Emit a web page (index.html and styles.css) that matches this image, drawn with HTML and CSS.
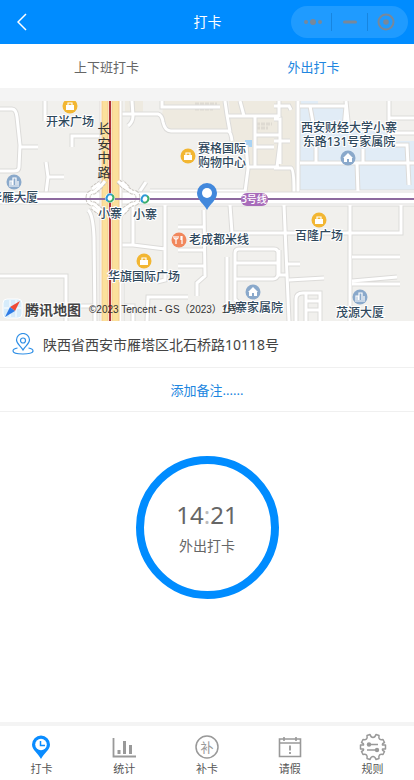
FILE: index.html
```
<!DOCTYPE html>
<html lang="zh-CN">
<head>
    <meta charset="UTF-8">
    <meta name="viewport" content="width=device-width, initial-scale=1.0">
    <title>打卡</title>
    <link rel="stylesheet" href="styles.css">
</head>
<body>
    <header class="nav-bar">
        <button class="nav-back" type="button" aria-label="返回">
            <svg width="10" height="18" viewBox="0 0 10 18"><path d="M9 1L1 9l8 8"/></svg>
        </button>
        <h1 class="nav-title">打卡</h1>
        <div class="capsule">
            <button type="button" aria-label="更多">
                <svg width="20" height="18" viewBox="0 0 20 18"><circle cx="3" cy="9" r="2"/><circle cx="10" cy="9" r="3"/><circle cx="17" cy="9" r="2"/></svg>
            </button>
            <button type="button" aria-label="最小化">
                <svg width="18" height="18" viewBox="0 0 18 18"><rect x="2" y="7.5" width="14" height="3" rx="1.5"/></svg>
            </button>
            <button type="button" aria-label="关闭">
                <svg width="18" height="18" viewBox="0 0 18 18"><circle class="ring" cx="9" cy="9" r="7.5"/><circle cx="9" cy="9" r="2.8"/></svg>
            </button>
        </div>
    </header>

    <nav class="tabs">
        <button class="tab" type="button">上下班打卡</button>
        <button class="tab active" type="button">外出打卡</button>
    </nav>

    <main class="content">
        <svg class="map" viewBox="0 0 414 220" preserveAspectRatio="xMidYMid slice">
            <defs>
                <path id="roads" d="M0 8h12q4 0 5 8l3 28-1 22q0 4-5 4H0M20 46h18M45 0v20M72 46V35h29M46 61l2 15-2 16M48 76h16
                    M132 0l1 15q0 6-5 10M121 13h37q4 1 5 8 2 9 8 9h57q3 1 4 10M162 0v6h58M225 0l2 14 3 17M227 15h52M255 14v52M240 0l4 15M255 34h24M255 46h19M280 20v43M248 66h31M246 44l2 24-3 23M279 0v16
                    M274 18h6v24l-3 24M274 40h16M274 67h17q3 1 3 24M274 5h15l2 4M140 90l6-9M150 90h95
                    M298 0v92M300 5h46l-2 22M310 5l4 22M346 0l3 30M389 0v40M389 17h25M389 32h25M300 62h114M357 62l1 30M316 42v20M363 48v14M389 44h18l2 40M300 91h114
                    M66 220v-45H0M66 205h29M88 109q5 4 6 27l1 84M133 105v39h-11M133 144l32 4M165 102v77l-8 2M150 103h264M122 182v38M122 205h11v15
                    M178 126h27M204 109l1 66-8 7v13M178 149h27M178 165h27M230 104l2 28h169v-28M284 104l5 116M289 179l35-2M288 163h12
                    M235 200v-48q0-4 4-4h35q4 0 4 4v22q-1 4-5 4h-38M235 162h42M227 156v54M147 220l1-24h40M235 198l5 5h8
                    M279 149v25h8M350 104v116M352 156h48M352 180l45-4M352 183h48M296 220v-22q0-6 7-6h17v28M306 192v28M306 200h14M306 209h14"/>
                <g id="poi-shop"><circle r="7.5"/><path fill="#fff" d="M-4-1h8v5h-8z"/><path class="poi-line" d="M-2-1v-2h4v2"/></g>
                <g id="poi-home"><circle r="7.5"/><path fill="#fff" d="M0-5L-5 0h1v4h3V1h2v3h3V0h1z"/></g>
                <g id="poi-tower"><circle r="7.5"/><path class="poi-line" d="M-5 4H5M-4 3v-4h2v4M-1 3v-7h3v7M4 3v-4"/></g>
                <g id="station"><circle r="5" fill="#fff"/><path d="M-2 3.2A3.8 3.8 0 0 1 2-3.2" stroke="#2d97d8"/><path d="M2-3.2A3.8 3.8 0 0 1-2 3.2" stroke="#3cae6b"/></g>
            </defs>
            <rect width="414" height="220" fill="#f1f0ed"/>
            <path fill="#eeeae0" d="M164 0h61l4 30h-59l-8-16zM229 0h66v91h-48l-2-48h-13zM125 0h18v12h-18z"/>
            <path fill="#e1ecf6" d="M300 5h46v25h43v10h25v51H300zM301 0h17v4h-17z"/>
            <path fill="#a9d3f4" d="M245 39h7v7h-7z"/>
            <path class="block-marks" d="M195 3h22M195 8h18M256 23h16M256 27h12"/>
            <use href="#roads" class="road-edge"/>
            <use href="#roads" class="road"/>

            <!-- 主干道与地铁 -->
            <path class="street-edge" d="M0 97h414"/>
            <path class="street" d="M0 97h414"/>
            <path fill="#fff" stroke="#e0ddda" d="M100-1h22v222h-22z"/>
            <path fill="#fbe09b" stroke="#f3c98c" d="M102-1h6v222h-6zM112-1h7v222h-7z"/>
            <g class="junction">
                <path class="junction-edge" d="M88 97q0-6 6-6l7-6 4-5M88 97q0 6 6 6l7 6 4 5M138 97q0-6-6-6l-9-6-5-5M138 97q0 6-6 6l-9 6-5 5M92 88l8-6M92 106l8 6M128 87l-6-6M128 107l-6 6"/>
                <path class="junction-road" d="M88 97q0-6 6-6l7-6 4-5M88 97q0 6 6 6l7 6 4 5M138 97q0-6-6-6l-9-6-5-5M138 97q0 6-6 6l-9 6-5 5M92 88l8-6M92 106l8 6M128 87l-6-6M128 107l-6 6"/>
            </g>
            <path d="M0 98h414" stroke="#8d6a9f" stroke-width="2"/>
            <path d="M110 0v220" stroke="#b0323c" stroke-width="2"/>
            <use href="#station" class="station" x="110" y="97"/>
            <use href="#station" class="station" x="145" y="98"/>
            <rect x="241" y="92" width="27" height="13" rx="6" fill="#a86cba"/>
            <text class="line-name" x="254" y="102">3号线</text>

            <g fill="#f2b632">
                <use href="#poi-shop" x="70" y="5"/>
                <use href="#poi-shop" x="188" y="55"/>
                <use href="#poi-shop" x="319" y="119"/>
                <use href="#poi-shop" x="144" y="160"/>
            </g>
            <g fill="#8aa9cb">
                <use href="#poi-tower" x="14" y="81"/>
                <use href="#poi-home" x="348" y="57"/>
                <use href="#poi-home" x="253" y="191"/>
                <use href="#poi-tower" x="360" y="196"/>
            </g>
            <circle cx="179" cy="139" r="7.5" fill="#f1875c"/>
            <path class="poi-line" d="M176 135v8M174 135v2q2 3 4 0v-2M182 135v8M181 135v4"/>

            <g class="map-label">
                <text x="70" y="25">开米广场</text>
                <text x="14" y="101">华雁大厦</text>
                <text x="222" y="52">赛格国际</text>
                <text x="222" y="66">购物中心</text>
                <text x="349" y="31">西安财经大学小寨</text>
                <text x="349" y="45">东路131号家属院</text>
                <text x="110" y="117">小寨</text>
                <text x="145" y="118">小寨</text>
                <text x="219" y="143">老成都米线</text>
                <text x="319" y="139">百隆广场</text>
                <text x="144" y="180">华旗国际广场</text>
                <text x="253" y="211">小寨家属院</text>
                <text x="360" y="216">茂源大厦</text>
            </g>
            <g class="road-name">
                <text x="104" y="32">长</text>
                <text x="104" y="47">安</text>
                <text x="104" y="61">中</text>
                <text x="104" y="76">路</text>
            </g>

            <path fill="#4288dc" d="M207 109c-3-6-10-10-10-17a10 10 0 0 1 20 0c0 7-7 11-10 17z"/>
            <circle cx="207" cy="92" r="5" fill="#fff"/>

            <rect x="3" y="198" width="19" height="19" rx="4" fill="#d7ecfb" stroke="#fff"/>
            <path stroke="#fff" d="M4 207h17M10 199v17M16 199v17"/>
            <path fill="#ef4b36" d="M20 200l-10 6 5 4z"/>
            <path fill="#2f7be5" d="M5 216l5-10 5 4z"/>
            <text class="map-brand" x="25" y="214">腾讯地图</text>
            <text class="map-copy" x="89" y="212">©2023 Tencent - GS（2023）1号</text>
        </svg>

        <div class="address">
            <svg width="22" height="22" viewBox="0 0 22 22">
                <path d="M11 17C9 13 4.500 11 4.500 7a6.500 6.500 0 0 1 13 0c0 4-4.500 6-6.500 10z"/>
                <circle cx="11" cy="7.500" r="2.500"/>
                <path d="M5.500 15C2.500 15.500 1 16.500 1 18c0 4 20 4 20 0 0-1.500-1.500-2.500-4.500-3"/>
            </svg>
            <span>陕西省西安市雁塔区北石桥路10118号</span>
        </div>
        <button class="remark" type="button">添加备注......</button>

        <button class="punch" type="button">
            <span class="punch-time">14<span class="colon">:</span>21</span>
            <span class="punch-text">外出打卡</span>
        </button>
    </main>

    <footer class="tab-bar">
        <a class="bar-item" href="#">
            <svg width="28" height="28" viewBox="0 0 28 28">
                <path fill="#0a8cff" d="M14 26C11 20 5 17 5 11.500a9 9 0 0 1 18 0C23 17 17 20 14 26z"/>
                <circle cx="14" cy="11.500" r="5.800" fill="#fff"/>
                <path class="clock-hand" d="M13.500 8v4.500H18"/>
            </svg>
            <span>打卡</span>
        </a>
        <a class="bar-item" href="#">
            <svg width="28" height="28" viewBox="0 0 28 28">
                <path d="M3.500 5v18.500H26" stroke-width="1.800"/>
                <path d="M9 17v4M14.500 8v13M20.500 12v9" stroke-width="3"/>
            </svg>
            <span>统计</span>
        </a>
        <a class="bar-item" href="#">
            <svg width="28" height="28" viewBox="0 0 28 28">
                <circle cx="14" cy="14" r="11" stroke-width="1.500"/>
                <text x="14" y="19">补</text>
            </svg>
            <span>补卡</span>
        </a>
        <a class="bar-item" href="#">
            <svg width="28" height="28" viewBox="0 0 28 28">
                <path d="M3.500 6h21v17.500h-21zM3.500 10h21M8 4v4M20 4v4" stroke-width="1.600"/>
                <path d="M14 12.500v5M14 19v2" stroke-width="1.800"/>
            </svg>
            <span>请假</span>
        </a>
        <a class="bar-item" href="#">
            <svg width="28" height="28" viewBox="0 0 28 28">
                <path stroke-width="1.500" stroke-linejoin="round" d="M11 1.500Q12 4.500 14 4.500T17 1.500L20 2.500Q19.500 5 20.500 6T24 6.500L25.500 9.500Q23 10.500 23.500 12H26.500v4H23.500Q23 17.500 25.500 18.500L24 21.500Q21.500 21 20.500 22T20 25.500L17 26.500Q16 23.500 14 23.500T11 26.500L8 25.500Q8.500 23 7.500 22T4 21.500L2.500 18.500Q5 17.500 4.500 16H1.500v-4H4.500Q5 10.500 2.500 9.500L4 6.500Q6.500 7 7.500 6T8 2.500z"/>
                <path d="M8 11.500h11M8 17h11" stroke-width="1.300"/>
                <circle cx="10" cy="11.500" r="2.200" fill="#999"/>
                <circle cx="18" cy="17" r="2.200" fill="#999"/>
            </svg>
            <span>规则</span>
        </a>
    </footer>
</body>
</html>
```
FILE: styles.css
```
* {
    box-sizing: border-box;
}
body {
    margin: 0;
    min-height: 100vh;
    display: flex;
    flex-direction: column;
    background: #fff;
    color: #444;
    font-family: "Noto Sans", "Noto Sans CJK SC", sans-serif;
    font-weight: 400;
}
button {
    padding: 0;
    border: none;
    background: none;
    color: inherit;
    font: inherit;
    cursor: pointer;
}
.nav-bar {
    display: grid;
    grid-template-columns: 1fr auto 1fr;
    align-items: center;
    height: 44px;
    padding: 0 6px 0 17px;
    background: #008cff;
    color: #fff;
}
.nav-back {
    justify-self: start;
    display: flex;
}
.nav-back svg {
    fill: none;
    stroke: #fff;
    stroke-width: 1.5;
}
.nav-title {
    margin: 0;
    padding-right: 10px;
    font-size: 14px;
    line-height: 20px;
    font-weight: 400;
}
.capsule {
    justify-self: end;
    display: flex;
    align-items: center;
    width: 117px;
    height: 32px;
    padding: 0 4px;
    border-radius: 16px;
    background: #1f9bff;
}
.capsule button {
    flex: 1;
    display: flex;
    justify-content: center;
    padding: 0;
}
.capsule button + button {
    border-left: 1px solid #1785e0;
}
.capsule svg {
    fill: #78889a;
}
.capsule .ring {
    fill: none;
    stroke: #78889a;
    stroke-width: 2;
}
.tabs {
    display: flex;
    height: 44px;
}
.tab {
    flex: 1;
    padding-left: 6px;
    font-size: 13px;
    color: #666;
}
.tab.active {
    color: #2086e0;
}
.content {
    flex: 1;
    display: flex;
    flex-direction: column;
    border-top: 13px solid #f4f4f4;
}
.map {
    display: block;
    width: 100%;
    height: 220px;
    fill: none;
}
.road-edge {
    stroke: #dcdbd9;
    stroke-width: 5;
}
.road {
    stroke: #fff;
    stroke-width: 3;
}
.block-marks {
    stroke: #dedad2;
    stroke-width: 3;
    stroke-dasharray: 4 1;
}
.street-edge {
    stroke: #dddcda;
    stroke-width: 13;
}
.street {
    stroke: #fff;
    stroke-width: 11;
}
.junction-edge {
    stroke: #c9c5bf;
    stroke-width: 5;
    stroke-dasharray: 3 1;
}
.junction-road {
    stroke: #fff;
    stroke-width: 3;
}
.station {
    stroke-width: 2;
}
.poi-line {
    fill: none;
    stroke: #fff;
    stroke-width: 1.2;
}
.line-name {
    fill: #fff;
    font-size: 10px;
    font-weight: 500;
    text-anchor: middle;
}
.map-label,
.road-name {
    fill: #2f485c;
    stroke: #fff;
    stroke-width: 2;
    paint-order: stroke;
    font-size: 12px;
    font-weight: 500;
    text-anchor: middle;
}
.road-name {
    fill: #333;
    stroke: none;
    font-size: 13px;
    font-weight: 400;
}
.map-brand {
    fill: #444;
    stroke: #fff;
    stroke-width: 2;
    paint-order: stroke;
    font-size: 14px;
    font-weight: 700;
}
.map-copy {
    fill: #333;
    font-family: "Liberation Sans", "Noto Sans CJK SC", sans-serif;
    font-size: 10px;
    font-weight: 400;
}
.address {
    display: flex;
    align-items: center;
    gap: 9px;
    height: 47px;
    padding: 0 12px;
    border-bottom: 1px solid #f0f0f0;
    font-size: 14px;
}
.address svg {
    fill: none;
    stroke: #2f8fe6;
    stroke-width: 1.2;
}
.remark {
    height: 44px;
    border-bottom: 1px solid #f0f0f0;
    color: #2086e0;
    font-size: 13px;
}
.punch {
    display: flex;
    flex-direction: column;
    align-items: center;
    justify-content: center;
    align-self: center;
    width: 143px;
    height: 143px;
    margin: 44px 0;
    border: 8px solid #008cff;
    border-radius: 50%;
    color: #666;
}
.punch-time {
    font-size: 24px;
    line-height: 36px;
}
.colon {
    color: #bbb;
}
.punch-text {
    font-size: 14px;
    line-height: 26px;
}
.tab-bar {
    display: flex;
    height: 58px;
    border-top: 4px solid #f4f4f4;
}
.bar-item {
    flex: 1;
    display: flex;
    flex-direction: column;
    align-items: center;
    padding-top: 7px;
    color: #555;
    font-size: 11px;
    line-height: 16px;
    text-decoration: none;
}
.bar-item svg {
    fill: none;
    stroke: #999;
}
.bar-item path[fill],
.bar-item circle[fill] {
    stroke: none;
}
.bar-item .clock-hand {
    stroke: #0a8cff;
    stroke-width: 1.5;
}
.bar-item text {
    fill: #999;
    stroke: none;
    font-size: 13px;
    font-weight: 400;
    text-anchor: middle;
}
```
